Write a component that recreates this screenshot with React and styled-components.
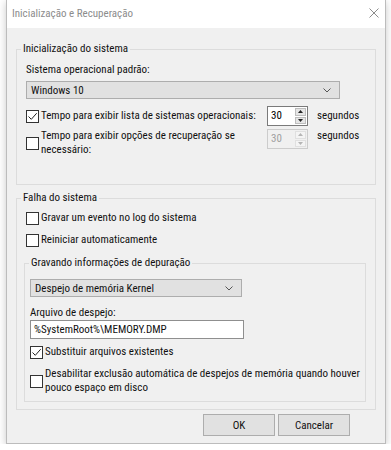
import styled, { createGlobalStyle } from "styled-components";

const Global = createGlobalStyle`
  body {
    margin: 0;
    background: #ffffff;
    font-family: "Roboto Condensed", "Liberation Sans", sans-serif;
    font-size: 11px;
    color: #111;
  }
`;

function CheckIcon() {
  return (
    <svg width="11" height="11" viewBox="0 0 11 11">
      <path d="M1.5 5.5 L4.3 8.3 L9.7 2.2" fill="none" stroke="#222" strokeWidth="1" />
    </svg>
  );
}

function Chevron() {
  return (
    <svg width="8" height="5" viewBox="0 0 8 5">
      <path d="M0.5 0.5 L4 4 L7.5 0.5" fill="none" stroke="#555" strokeWidth="1" />
    </svg>
  );
}

function Arrow({ up, color }) {
  return (
    <svg width="5" height="3" viewBox="0 0 5 3">
      <path d={up ? "M0 3 L2.5 0 L5 3 Z" : "M0 0 L2.5 3 L5 0 Z"} fill={color} />
    </svg>
  );
}

function Check({ checked, gap, children }) {
  return (
    <CheckRow gap={gap}>
      <Box>{checked && <CheckIcon />}</Box>
      <CheckText>{children}</CheckText>
    </CheckRow>
  );
}

function Spinner({ value, disabled }) {
  const c = disabled ? "#b5b5b5" : "#222";
  return (
    <Spin disabled={disabled}>
      <SpinValue>{value}</SpinValue>
      <SpinButtons>
        <SpinBtn disabled={disabled}>
          <Arrow up color={c} />
        </SpinBtn>
        <SpinBtn disabled={disabled}>
          <Arrow color={c} />
        </SpinBtn>
      </SpinButtons>
    </Spin>
  );
}

export default function App() {
  return (
    <>
      <Global />
      <Window>
        <TitleBar>
          <Title>Inicialização e Recuperação</Title>
          <svg width="10" height="10" viewBox="0 0 10 10">
            <path d="M0.5 0.5 L9.5 9.5 M9.5 0.5 L0.5 9.5" stroke="#8c8c8c" strokeWidth="1" />
          </svg>
        </TitleBar>
        <Body>
          <Group>
            <Legend>Inicialização do sistema</Legend>
            <Label>Sistema operacional padrão:</Label>
            <Combo width="314px">
              <span>Windows 10</span>
              <Chevron />
            </Combo>
            <TimeRow>
              <TimeLabel>
                <Check checked>Tempo para exibir lista de sistemas operacionais:</Check>
              </TimeLabel>
              <Spinner value="30" />
              <Unit>segundos</Unit>
            </TimeRow>
            <TimeRow top>
              <TimeLabel>
                <Check>
                  Tempo para exibir opções de recuperação se
                  <br />
                  necessário:
                </Check>
              </TimeLabel>
              <Spinner value="30" disabled />
              <Unit>segundos</Unit>
            </TimeRow>
          </Group>

          <Group crash>
            <Legend>Falha do sistema</Legend>
            <Check>Gravar um evento no log do sistema</Check>
            <Check>Reiniciar automaticamente</Check>
            <Inner>
              <Legend inner>Gravando informações de depuração</Legend>
              <Combo width="212px">
                <span>Despejo de memória Kernel</span>
                <Chevron />
              </Combo>
              <Label spaced>Arquivo de despejo:</Label>
              <Input>%SystemRoot%\MEMORY.DMP</Input>
              <Check checked gap="6px">
                Substituir arquivos existentes
              </Check>
              <Check gap="8px">
                Desabilitar exclusão automática de despejos de memória quando houver
                <br />
                pouco espaço em disco
              </Check>
            </Inner>
          </Group>

          <Buttons>
            <Button>OK</Button>
            <Button>Cancelar</Button>
          </Buttons>
        </Body>
      </Window>
    </>
  );
}

const Window = styled.div`
  margin-left: 6px;
  width: 378px;
  height: 443px;
  border: 1px solid #bcbcbc;
  border-top: none;
  background: #f0f0f0;
  box-shadow: 0 2px 8px rgba(0, 0, 0, 0.22);
  display: flex;
  flex-direction: column;
`;

const TitleBar = styled.div`
  height: 28px;
  flex-shrink: 0;
  background: #ffffff;
  display: flex;
  align-items: center;
  justify-content: space-between;
  padding: 0 6px 2px 5px;
  box-sizing: border-box;
`;

const Title = styled.div`
  color: #8c8c8c;
  font-size: 11px;
`;

const Body = styled.div`
  padding: 14px 9px 0 9px;
  display: flex;
  flex-direction: column;
`;

const Group = styled.fieldset`
  margin: ${(p) => (p.crash ? "6px 0 0" : "0")};
  padding: ${(p) => (p.crash ? "6px 9px 7px" : "7px 9px 27px")};
  border: 1px solid #dcdcdc;
  display: flex;
  flex-direction: column;
  align-items: flex-start;
  gap: ${(p) => (p.crash ? "8px" : "3px")};
`;

const Inner = styled.fieldset`
  margin: 1px 0 0 -2px;
  width: 339px;
  box-sizing: border-box;
  padding: 8px 5px 6px;
  border: 1px solid #dcdcdc;
  display: flex;
  flex-direction: column;
  align-items: flex-start;
`;

const Legend = styled.legend`
  padding: 0 2px;
  margin-left: ${(p) => (p.inner ? "-1px" : "-5px")};
  line-height: 14px;
`;

const Label = styled.div`
  line-height: 14px;
  margin-top: ${(p) => (p.spaced ? "9px" : "0")};
`;

const Combo = styled.div`
  width: ${(p) => p.width};
  height: 18px;
  box-sizing: border-box;
  border: 1px solid #adadad;
  background: #e1e1e1;
  display: flex;
  align-items: center;
  justify-content: space-between;
  padding: 0 8px 0 4px;
  margin-top: 1px;
`;

const TimeRow = styled.div`
  display: flex;
  align-items: ${(p) => (p.top ? "flex-start" : "center")};
  margin-top: ${(p) => (p.top ? "0" : "4px")};
`;

const TimeLabel = styled.div`
  width: 241px;
`;

const CheckRow = styled.div`
  display: flex;
  align-items: center;
  line-height: 14px;
  margin-top: ${(p) => p.gap || "0"};
`;

const Box = styled.div`
  width: 13px;
  height: 13px;
  box-sizing: border-box;
  border: 1px solid #333;
  background: #fff;
  display: flex;
  align-items: center;
  justify-content: center;
  margin-right: 2px;
  flex-shrink: 0;
`;

const CheckText = styled.div`
  white-space: nowrap;
`;

const Spin = styled.div`
  width: 41px;
  height: 20px;
  box-sizing: border-box;
  border: 1px solid ${(p) => (p.disabled ? "#cccccc" : "#7a7a7a")};
  background: ${(p) => (p.disabled ? "#f0f0f0" : "#fff")};
  color: ${(p) => (p.disabled ? "#a0a0a0" : "#000")};
  display: flex;
`;

const SpinValue = styled.div`
  flex: 1;
  padding-left: 3px;
  line-height: 18px;
`;

const SpinButtons = styled.div`
  width: 11px;
  display: flex;
  flex-direction: column;
  padding: 1px 1px 1px 0;
  gap: 1px;
`;

const SpinBtn = styled.div`
  flex: 1;
  background: ${(p) => (p.disabled ? "#f4f4f4" : "#e5e5e5")};
  border: 1px solid ${(p) => (p.disabled ? "#e0e0e0" : "#bdbdbd")};
  display: flex;
  align-items: center;
  justify-content: center;
`;

const Unit = styled.div`
  margin-left: 9px;
  line-height: 14px;
`;

const Input = styled.div`
  width: 214px;
  height: 19px;
  box-sizing: border-box;
  border: 1px solid #8f8f8f;
  background: #fff;
  padding-left: 3px;
  line-height: 17px;
`;

const Buttons = styled.div`
  display: flex;
  justify-content: flex-end;
  gap: 3px;
  padding: 4px 26px 0 0;
`;

const Button = styled.div`
  width: 72px;
  height: 22px;
  box-sizing: border-box;
  border: 1px solid #adadad;
  background: #e1e1e1;
  display: flex;
  align-items: center;
  justify-content: center;
`;
